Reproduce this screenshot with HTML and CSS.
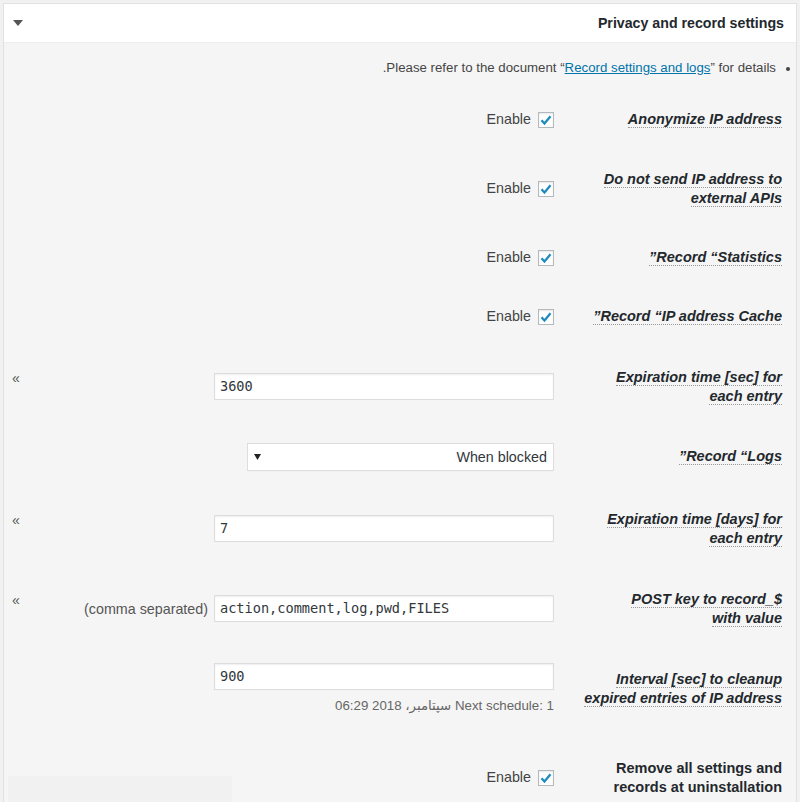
FILE: index.html
```html
<!DOCTYPE html>
<html lang="en" dir="rtl">
<head>
<meta charset="utf-8">
<title>Privacy and record settings</title>
<link rel="stylesheet" href="styles.css">
</head>
<body>
<div class="postbox">
  <div class="hndle">
    <h2 class="title">Privacy and record settings</h2>
    <span class="toggle"><svg width="10" height="6" viewBox="0 0 10 6"><path d="M0 0h10L5 6z" fill="#555"/></svg></span>
  </div>
  <div class="inside">
    <ul class="note">
      <li>Please refer to the document “<a href="#">Record settings and logs</a>” for details.</li>
    </ul>

    <div class="row h59">
      <div class="th"><dfn>Anonymize IP address</dfn></div>
      <div class="td"><label class="check"><span class="box"><svg width="14" height="14" viewBox="0 0 14 14"><path d="M2.5 7.2l3 3.3 6-7.2" fill="none" stroke="#1e8cbe" stroke-width="2.3"/></svg></span>Enable</label></div>
    </div>

    <div class="row h79">
      <div class="th"><dfn>Do not send IP address to external APIs</dfn></div>
      <div class="td"><label class="check"><span class="box"><svg width="14" height="14" viewBox="0 0 14 14"><path d="M2.5 7.2l3 3.3 6-7.2" fill="none" stroke="#1e8cbe" stroke-width="2.3"/></svg></span>Enable</label></div>
    </div>

    <div class="row h59">
      <div class="th"><dfn>Record “Statistics”</dfn></div>
      <div class="td"><label class="check"><span class="box"><svg width="14" height="14" viewBox="0 0 14 14"><path d="M2.5 7.2l3 3.3 6-7.2" fill="none" stroke="#1e8cbe" stroke-width="2.3"/></svg></span>Enable</label></div>
    </div>

    <div class="row h59">
      <div class="th"><dfn>Record “IP address Cache”</dfn></div>
      <div class="td"><label class="check"><span class="box"><svg width="14" height="14" viewBox="0 0 14 14"><path d="M2.5 7.2l3 3.3 6-7.2" fill="none" stroke="#1e8cbe" stroke-width="2.3"/></svg></span>Enable</label></div>
    </div>

    <div class="row h81">
      <div class="th"><dfn>Expiration time [sec] for each entry</dfn></div>
      <div class="td"><span class="field">3600</span><span class="sub">»</span></div>
    </div>

    <div class="row h59">
      <div class="th"><dfn>Record “Logs”</dfn></div>
      <div class="td"><span class="select"><span class="sel-text">When blocked</span><svg width="7" height="6" viewBox="0 0 7 6"><path d="M0 0h7L3.5 6z" fill="#222"/></svg></span></div>
    </div>

    <div class="row h85">
      <div class="th"><dfn>Expiration time [days] for each entry</dfn></div>
      <div class="td"><span class="field">7</span><span class="sub">»</span></div>
    </div>

    <div class="row h75">
      <div class="th"><dfn>$_POST key to record<br>with value</dfn></div>
      <div class="td"><span class="field">action,comment,log,pwd,FILES</span><span class="hint">(comma separated)</span><span class="sub">»</span></div>
    </div>

    <div class="row h85">
      <div class="th"><dfn>Interval [sec] to cleanup expired entries of IP address</dfn></div>
      <div class="td">
        <div class="stack">
          <span class="field">900</span>
          <p class="desc">Next schedule: 1 سپتامبر، 2018 06:29</p>
        </div>
      </div>
    </div>

    <div class="row h93">
      <div class="th plain">Remove all settings and records at uninstallation</div>
      <div class="td"><label class="check"><span class="box"><svg width="14" height="14" viewBox="0 0 14 14"><path d="M2.5 7.2l3 3.3 6-7.2" fill="none" stroke="#1e8cbe" stroke-width="2.3"/></svg></span>Enable</label></div>
    </div>
  </div>
</div>
<div class="corner"></div>
</body>
</html>
```

FILE: styles.css
```css
html, body {
  margin: 0;
  padding: 0;
  background: #f1f1f1;
}
body {
  padding: 3px 3px 0 3px;
  font-family: "Liberation Sans", Arial, sans-serif;
  font-size: 14.3px;
  color: #444;
}
.postbox {
  border: 1px solid #e2e2e2;
  border-bottom: none;
  background: #f5f5f5;
}
.hndle {
  display: flex;
  align-items: center;
  justify-content: space-between;
  height: 38px;
  background: #fff;
  border-bottom: 1px solid #eee;
  padding: 0 12px 0 9px;
}
.title {
  margin: 0;
  font-size: 14.2px;
  font-weight: 700;
  color: #23282d;
  line-height: 40px;
}
.toggle {
  display: flex;
  align-items: center;
}
.inside {
  padding: 16px 0 0 0;
}
.note {
  margin: 0 0 13px 0;
  padding: 0 20px 0 0;
  font-size: 13.25px;
  line-height: 18px;
  color: #444;
}
.note li::marker {
  font-size: 12px;
}
.note a {
  color: #0073aa;
  text-decoration: underline;
}
.row {
  display: grid;
  grid-template-columns: 200px 1fr;
  column-gap: 28px;
  align-items: center;
  padding: 0 14px 0 8px;
}
.h59 { min-height: 59px; }
.h75 { min-height: 75px; }
.h79 { min-height: 79px; }
.h81 { min-height: 81px; }
.h85 { min-height: 85px; }
.h93 { min-height: 93px; }
.th {
  font-style: italic;
  font-weight: 700;
  font-size: 14.5px;
  color: #23282d;
  line-height: 19px;
}
.th dfn {
  font-style: italic;
  border-bottom: 1px dotted #999;
}
.th.plain {
  font-style: normal;
}
.td {
  display: flex;
  align-items: center;
  gap: 6px;
  min-height: 27px;
}
.check {
  display: flex;
  align-items: center;
  gap: 7px;
  color: #444;
  line-height: 19px;
}
.box {
  width: 16px;
  height: 16px;
  box-sizing: border-box;
  border: 1px solid #b4b9be;
  background: #fff;
  box-shadow: inset 0 1px 2px rgba(0,0,0,.1);
  display: flex;
  align-items: center;
  justify-content: center;
}
.field {
  direction: ltr;
  box-sizing: border-box;
  width: 340px;
  height: 27px;
  padding: 0 5px;
  border: 1px solid #ddd;
  background: #fff;
  box-shadow: inset 0 1px 2px rgba(0,0,0,.07);
  font-family: "DejaVu Sans Mono", monospace;
  font-size: 13.6px;
  line-height: 25px;
  color: #32373c;
  text-align: left;
}
.select {
  box-sizing: border-box;
  width: 307px;
  height: 28px;
  display: flex;
  align-items: center;
  justify-content: space-between;
  padding: 0 6px 0 6px;
  border: 1px solid #ddd;
  background: #fff;
  box-shadow: 0 1px 1px -1px rgba(0,0,0,.1);
  color: #32373c;
}
.hint {
  color: #555;
}
.sub {
  margin-right: auto;
  align-self: flex-start;
  color: #555;
  font-size: 14px;
  line-height: 14px;
  margin-top: -2px;
}
.stack {
  display: flex;
  flex-direction: column;
  align-items: flex-start;
  gap: 8px;
}
.desc {
  margin: 0;
  font-size: 13.3px;
  line-height: 16px;
  color: #666;
  font-family: "Liberation Sans", "DejaVu Sans", sans-serif;
}
.corner {
  position: fixed;
  left: 8px;
  bottom: 0;
  width: 224px;
  height: 26px;
  background: #f1f1f1;
}
```
